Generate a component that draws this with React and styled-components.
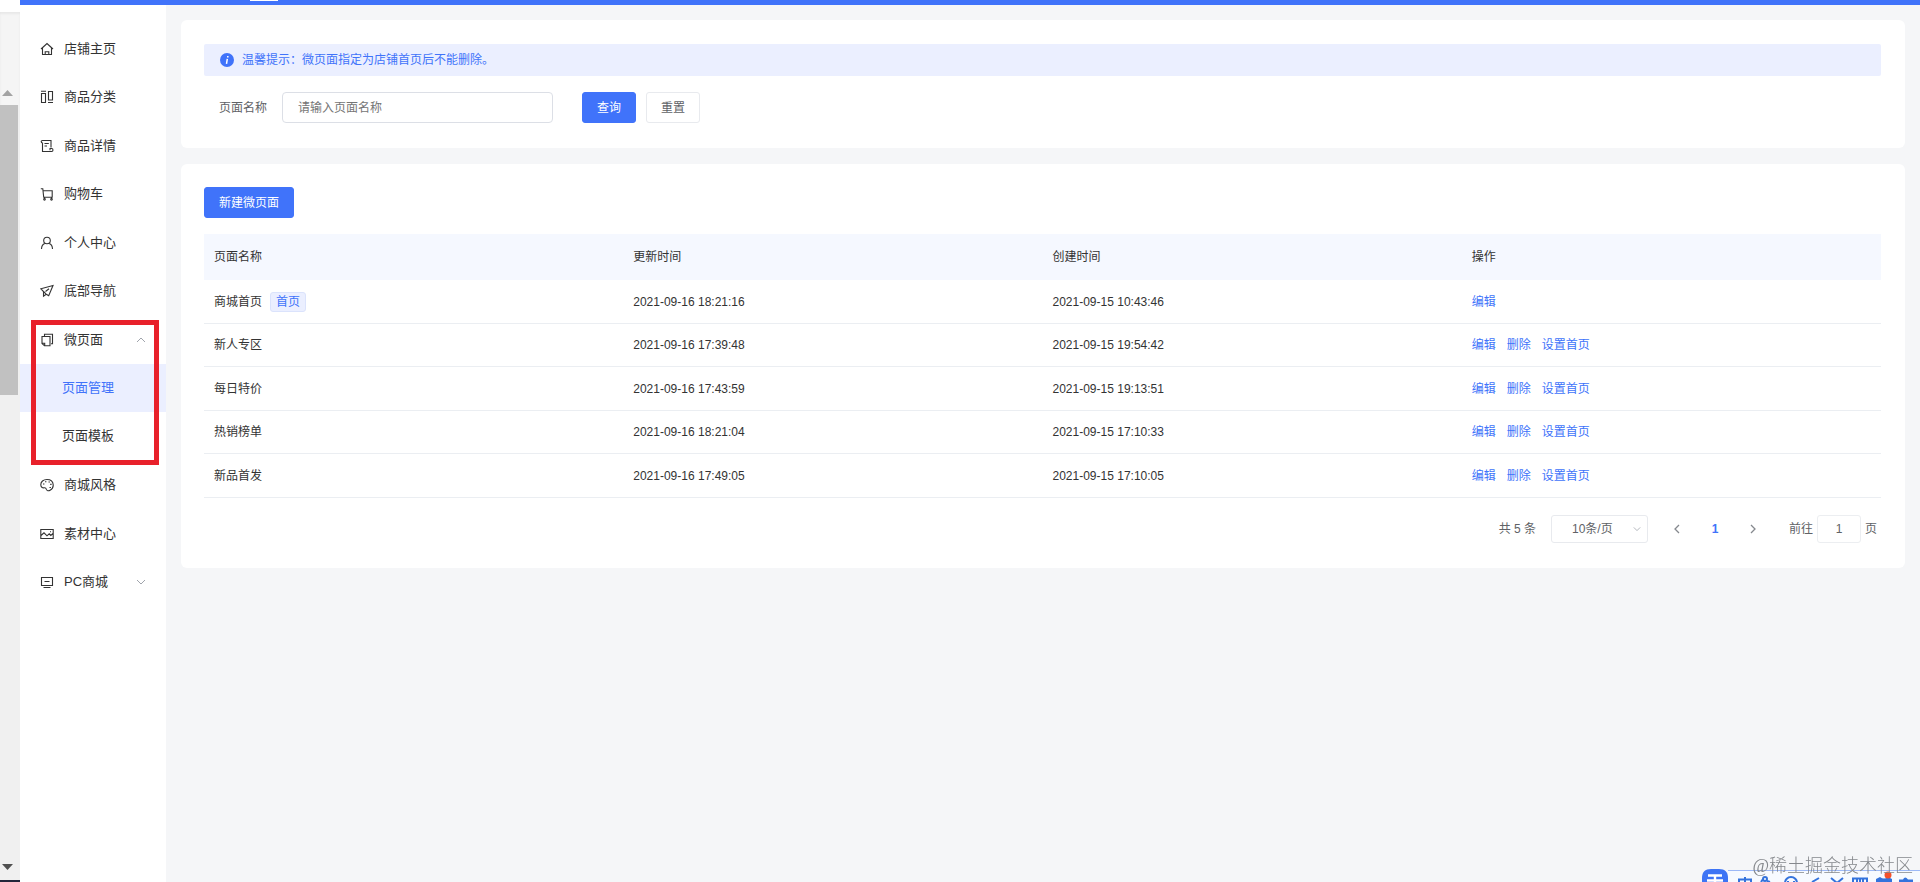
import React, { useState } from 'react';
import styled, { createGlobalStyle, ThemeProvider } from 'styled-components';

const theme = {
  primary: '#4073fa',
  primaryLight: '#ebefff',
  headLight: '#f5f8ff',
  page: '#f5f6f8',
  text: '#333333',
  textSecondary: '#606266',
  border: '#dcdfe6',
  line: '#ebeef2',
  mark: '#e8212b',
};

const GlobalStyle = createGlobalStyle`
  * {
    box-sizing: border-box;
  }

  body {
    margin: 0;
    background: ${props => props.theme.page};
    color: ${props => props.theme.text};
    font-family: 'Liberation Sans', 'Noto Sans CJK SC', sans-serif;
    font-size: 12px;
    line-height: 20px;
  }

  button, input, select {
    font: inherit;
    color: inherit;
  }
`;

const Shell = styled.div`
  display: flex;
  min-height: 100vh;
`;

const Rail = styled.div`
  display: flex;
  flex-direction: column;
  flex: none;
  width: 20px;
  background: #f0f0f0;
  border-bottom: 2px solid #23263a;
`;

const RailTop = styled.div`
  height: 12px;
  background: #ffffff;
`;

const RailHead = styled.div`
  height: 93px;
  padding: 78px 0 0 2px;
  background: #f5f5f5;
  box-shadow: inset 0 2px 2px #e8e8e8;
`;

const RailThumb = styled.div`
  width: 18px;
  height: 290px;
  background: #c1c1c1;
`;

const RailFoot = styled.div`
  margin-top: auto;
  height: 16px;
  padding-left: 2px;
`;

const Arrow = styled.svg`
  display: block;
  width: 11px;
  height: 6px;
  fill: ${props => props.$color};
`;

const Main = styled.div`
  display: flex;
  flex-direction: column;
  flex: 1;
  min-width: 0;
`;

const TopBar = styled.header`
  height: 5px;
  padding-left: 230px;
  background: ${props => props.theme.primary};
`;

const TopMark = styled.div`
  width: 28px;
  height: 1px;
  background: #ffffff;
`;

const Body = styled.div`
  display: flex;
  flex: 1;
`;

const Sidebar = styled.nav`
  flex: none;
  width: 146px;
  padding-top: 20px;
  background: #ffffff;
  font-size: 13px;
`;

const Menu = styled.ul`
  margin: 0;
  padding: 0;
  list-style: none;
`;

const MenuItem = styled.li`
  position: relative;

  &:nth-child(even) {
    margin-bottom: 1px;
  }
`;

const MenuLink = styled.a`
  display: flex;
  align-items: center;
  height: 48px;
  padding: 0 20px;
  color: ${props => props.theme.text};
  text-decoration: none;
`;

const MenuText = styled.span`
  flex: 1;
  margin-left: 10px;
`;

const SubMenu = styled.div`
  padding-bottom: 1px;
`;

const SubLink = styled.a`
  display: flex;
  align-items: center;
  height: 48px;
  padding-left: 42px;
  background: ${props => (props.$active ? props.theme.primaryLight : 'transparent')};
  color: ${props => (props.$active ? props.theme.primary : props.theme.text)};
  text-decoration: none;
`;

const Highlight = styled.div`
  position: absolute;
  top: 4px;
  right: 7px;
  bottom: -4px;
  left: 11px;
  border: 5px solid ${props => props.theme.mark};
  pointer-events: none;
`;

const Icon = styled.svg`
  flex: none;
  width: 14px;
  height: 14px;
  fill: none;
  stroke: currentColor;
  stroke-width: 1.1;
`;

const Chevron = styled.svg`
  flex: none;
  width: ${props => props.$size || 10}px;
  height: ${props => props.$size || 10}px;
  fill: none;
  stroke: ${props => props.$color || '#a0a4ac'};
  stroke-width: ${props => props.$weight || 1};
`;

const Content = styled.main`
  display: flex;
  flex: 1;
  flex-direction: column;
  gap: 16px;
  min-width: 0;
  padding: 15px;
`;

const Card = styled.section`
  padding: ${props => props.$top}px 24px 25px 23px;
  border-radius: 6px;
  background: #ffffff;
`;

const Notice = styled.p`
  display: flex;
  align-items: center;
  gap: 8px;
  height: 32px;
  margin: 0 0 16px;
  padding-left: 16px;
  border-radius: 2px;
  background: ${props => props.theme.primaryLight};
  color: ${props => props.theme.primary};
`;

const NoticeIcon = styled.svg`
  width: 14px;
  height: 14px;
`;

const SearchForm = styled.form`
  display: flex;
  align-items: center;
  padding-left: 15px;
`;

const Label = styled.label`
  color: ${props => props.theme.textSecondary};
`;

const SearchInput = styled.input`
  width: 271px;
  height: 31px;
  margin: 0 29px 0 15px;
  padding: 0 15px;
  border: 1px solid ${props => props.theme.border};
  border-radius: 4px;
  outline: none;

  &::placeholder {
    color: #757575;
    opacity: 1;
  }
`;

const Button = styled.button`
  height: 31px;
  padding: 0 14px;
  border: 1px solid ${props => (props.$primary ? props.theme.primary : '#e8eaee')};
  border-radius: 3px;
  background: ${props => (props.$primary ? props.theme.primary : '#ffffff')};
  color: ${props => (props.$primary ? '#ffffff' : props.theme.textSecondary)};
  cursor: pointer;

  & + & {
    margin-left: 10px;
  }
`;

const Table = styled.table`
  width: 100%;
  margin-top: 16px;
  border-collapse: separate;
  border-spacing: 0;
  table-layout: fixed;
`;

const HeadCell = styled.th`
  height: 46px;
  padding: 0 10px;
  background: ${props => props.theme.headLight};
  font-weight: 400;
  text-align: left;
`;

const Row = styled.tr`
  height: 43px;

  &:nth-child(odd) {
    height: 44px;
  }
`;

const Cell = styled.td`
  padding: 0 10px;
  border-bottom: 1px solid ${props => props.theme.line};
`;

const NameLine = styled.div`
  display: flex;
  align-items: center;
  gap: 8px;
`;

const Tag = styled.span`
  padding: 0 5px;
  border: 1px solid #dbe3fc;
  border-radius: 3px;
  background: ${props => props.theme.primaryLight};
  color: ${props => props.theme.primary};
  line-height: 18px;
`;

const Actions = styled.div`
  display: flex;
  gap: 11px;
`;

const Action = styled.a`
  color: ${props => props.theme.primary};
  text-decoration: none;
`;

const Pager = styled.div`
  display: flex;
  align-items: center;
  justify-content: flex-end;
  margin-top: 17px;
  padding-right: 4px;
  color: ${props => props.theme.textSecondary};
`;

const SizeBox = styled.div`
  position: relative;
  margin: 0 10px 0 15px;
`;

const SizeSelect = styled.select`
  display: block;
  width: 97px;
  height: 28px;
  padding: 0 20px;
  border: 1px solid #e8eaee;
  border-radius: 3px;
  background: #ffffff;
  appearance: none;
`;

const SizeArrow = styled.span`
  position: absolute;
  top: 0;
  right: 7px;
  display: flex;
  align-items: center;
  height: 28px;
  pointer-events: none;
`;

const PageButton = styled.button`
  display: flex;
  align-items: center;
  justify-content: center;
  width: 38px;
  height: 28px;
  padding: 0;
  border: 0;
  background: transparent;
  color: ${props => props.theme.primary};
  font-weight: 700;
  cursor: pointer;
`;

const JumpLabel = styled.label`
  display: flex;
  align-items: center;
  gap: 4px;
  margin-left: 17px;
`;

const JumpInput = styled.input`
  width: 44px;
  height: 28px;
  padding: 0;
  border: 1px solid #eceef1;
  border-radius: 3px;
  text-align: center;
`;

const Watermark = styled.div`
  position: fixed;
  right: 7px;
  bottom: 3px;
  z-index: 2;
  color: #85888c;
  font-family: 'Liberation Serif', 'Noto Sans CJK SC', serif;
  font-size: 18px;
  font-weight: 300;
  line-height: 26px;
`;

const InputBar = styled.div`
  position: fixed;
  right: 0;
  bottom: 0;
  display: flex;
  align-items: flex-end;
  height: 13px;
`;

const InputLogo = styled.svg`
  display: block;
  width: 26px;
  height: 13px;
`;

const InputIcons = styled.svg`
  display: block;
  width: 192px;
  height: 12px;
`;

const icons = {
  home: <path d="M1 7 7 1.5 13 7M2.5 6v6.500h9V6M5.2 12.500V9.800h3.600v2.700" />,
  category: <path d="M1.5 3.500h4v9h-4zM8.500 1.500h4v8.500h-4zM1 1.300h5M8 12.500h5" />,
  detail: (
    <path d="M2.500 1.500h8.500v7M2.500 1.500C.8 1.500.8 4 2.500 4v8.500h9.200c1.700 0 1.700-3 0-3H10v1.800M4.500 4.500h4.300M4.500 7H7" />
  ),
  cart: (
    <>
      <path d="M.8 1.800h2l.9 8.500h8.500V3.800H3M4.500 10.300v1.500M11.500 10.300v1.500" />
      <circle cx="4.500" cy="12.300" r=".8" />
      <circle cx="11.500" cy="12.300" r=".8" />
    </>
  ),
  user: (
    <>
      <circle cx="7" cy="4.500" r="3.300" />
      <path d="M1.500 13c.1-3 1.200-4.800 3.300-5.500M12.500 13c-.1-3-1.200-4.800-3.300-5.500" />
    </>
  ),
  send: <path d="M13 1.500.9 4.800l2.600 2.700v4.700l2.700-2 2.500 1.600zM3.500 7.500l2.700 2.700M5.500 7.500l3.500-2.700" />,
  pages: <path d="M4.500 3V1.200h8v9.600H11M2 3.500h8v9.300H4.500L2 10.500zM2.300 10.300h2.400v2.300" />,
  palette: (
    <>
      <path d="M7 1.500C3.200 1.500.8 3.800.8 6.700c0 2.300 1.700 3.400 3.300 3.100 1.500-.3 2 .6 2.300 1.600.5 1.400 2 1.800 3.700.9 2.200-1.200 3.300-3.100 3.100-5.600C13 3.500 10.500 1.500 7 1.500z" />
      <path d="M3 6h1.400M5 3.800h1.400M8.500 4h1.400M10.200 6.400h1.400M9.500 9.500h1.400" />
    </>
  ),
  image: <path d="M.8 2.500h12.400v9H.8zM1 8.500l3-2.700 3 3 2.200-2 1.600 1.700 2.200-2M10 4.800h1" />,
  desktop: <path d="M1.500 2.500h11v8h-11zM4.500 6.500h5M3.500 12.500h7" />,
};

const menu = [
  { label: '店铺主页', icon: 'home' },
  { label: '商品分类', icon: 'category' },
  { label: '商品详情', icon: 'detail' },
  { label: '购物车', icon: 'cart' },
  { label: '个人中心', icon: 'user' },
  { label: '底部导航', icon: 'send' },
  { label: '微页面', icon: 'pages', children: ['页面管理', '页面模板'] },
  { label: '商城风格', icon: 'palette' },
  { label: '素材中心', icon: 'image' },
  { label: 'PC商城', icon: 'desktop', collapsed: true },
];

const rows = [
  { name: '商城首页', updated: '2021-09-16 18:21:16', created: '2021-09-15 10:43:46', home: true },
  { name: '新人专区', updated: '2021-09-16 17:39:48', created: '2021-09-15 19:54:42' },
  { name: '每日特价', updated: '2021-09-16 17:43:59', created: '2021-09-15 19:13:51' },
  { name: '热销榜单', updated: '2021-09-16 18:21:04', created: '2021-09-15 17:10:33' },
  { name: '新品首发', updated: '2021-09-16 17:49:05', created: '2021-09-15 17:10:05' },
];

const SideMenu = () => {
  const [active, setActive] = useState('页面管理');

  return (
    <Sidebar>
      <Menu>
        {menu.map(item => (
          <MenuItem key={item.label}>
            <MenuLink href="#">
              <Icon viewBox="0 0 14 14">{icons[item.icon]}</Icon>
              <MenuText>{item.label}</MenuText>
              {item.children && (
                <Chevron viewBox="0 0 10 10">
                  <path d="M1 7l4-4 4 4" />
                </Chevron>
              )}
              {item.collapsed && (
                <Chevron viewBox="0 0 10 10">
                  <path d="M1 3l4 4 4-4" />
                </Chevron>
              )}
            </MenuLink>
            {item.children && (
              <SubMenu>
                {item.children.map(child => (
                  <SubLink
                    key={child}
                    href="#"
                    $active={active === child}
                    onClick={() => setActive(child)}
                  >
                    {child}
                  </SubLink>
                ))}
              </SubMenu>
            )}
            {item.children && <Highlight />}
          </MenuItem>
        ))}
      </Menu>
    </Sidebar>
  );
};

const SearchCard = () => {
  const [name, setName] = useState('');

  return (
    <Card $top={24}>
      <Notice>
        <NoticeIcon viewBox="0 0 14 14">
          <circle cx="7" cy="7" r="7" fill="#4073fa" />
          <path d="M7.3 5.8 6.5 10.8M7.8 3v1.5" stroke="#ffffff" strokeWidth="1.5" />
        </NoticeIcon>
        温馨提示：微页面指定为店铺首页后不能删除。
      </Notice>
      <SearchForm onSubmit={e => e.preventDefault()}>
        <Label htmlFor="page-name">页面名称</Label>
        <SearchInput
          id="page-name"
          placeholder="请输入页面名称"
          value={name}
          onChange={e => setName(e.target.value)}
        />
        <Button type="submit" $primary>
          查询
        </Button>
        <Button type="button" onClick={() => setName('')}>
          重置
        </Button>
      </SearchForm>
    </Card>
  );
};

const Pagination = () => (
  <Pager>
    <span>共 5 条</span>
    <SizeBox>
      <SizeSelect aria-label="每页条数" defaultValue="10">
        <option value="10">10条/页</option>
      </SizeSelect>
      <SizeArrow>
        <Chevron viewBox="0 0 10 10" $size={8} $color="#a0a4ac">
          <path d="M1 3l4 4 4-4" />
        </Chevron>
      </SizeArrow>
    </SizeBox>
    <PageButton type="button" aria-label="上一页">
      <Chevron viewBox="0 0 10 10" $color="#85888e" $weight={1.3}>
        <path d="M7 1 3 5l4 4" />
      </Chevron>
    </PageButton>
    <PageButton type="button">1</PageButton>
    <PageButton type="button" aria-label="下一页">
      <Chevron viewBox="0 0 10 10" $color="#85888e" $weight={1.3}>
        <path d="M3 1l4 4-4 4" />
      </Chevron>
    </PageButton>
    <JumpLabel>
      前往
      <JumpInput defaultValue="1" />页
    </JumpLabel>
  </Pager>
);

const PageTable = () => (
  <Card $top={23}>
    <Button type="button" $primary>
      新建微页面
    </Button>
    <Table>
      <thead>
        <tr>
          <HeadCell>页面名称</HeadCell>
          <HeadCell>更新时间</HeadCell>
          <HeadCell>创建时间</HeadCell>
          <HeadCell>操作</HeadCell>
        </tr>
      </thead>
      <tbody>
        {rows.map(row => (
          <Row key={row.name}>
            <Cell>
              <NameLine>
                {row.name}
                {row.home && <Tag>首页</Tag>}
              </NameLine>
            </Cell>
            <Cell>{row.updated}</Cell>
            <Cell>{row.created}</Cell>
            <Cell>
              <Actions>
                <Action href="#">编辑</Action>
                {!row.home && <Action href="#">删除</Action>}
                {!row.home && <Action href="#">设置首页</Action>}
              </Actions>
            </Cell>
          </Row>
        ))}
      </tbody>
    </Table>
    <Pagination />
  </Card>
);

// Input method toolbar docked at the bottom edge, only its top shows
const InputToolbar = () => (
  <InputBar>
    <InputLogo viewBox="0 0 26 13">
      <path d="M0 13V9C0 3 3 0 9 0h8c6 0 9 3 9 9v4z" fill="#3d74f5" />
      <path d="M6 6.500h14M5 11.500h16M13 6.500V13" stroke="#ffffff" strokeWidth="2.400" />
    </InputLogo>
    <InputIcons viewBox="0 0 192 12">
      <rect width="192" height="12" fill="#f7faff" />
      <path d="M0 .5h192" stroke="#9db9f7" />
      <g fill="none" stroke="#3473dd" strokeWidth="2">
        <path d="M11 12V9.500h12V12M17 7v5M33 12l2-3M42 12l-3-1" />
        <circle cx="37" cy="9" r="2" />
        <circle cx="63" cy="13" r="6" />
        <path d="M60 12v-1M66 12v-1M84 12l7-4M103 8l6 5M115 8l-6 5M125 12V8.500h14V12M129 9v3M132 9v3M135 9v3" />
      </g>
      <path d="M148 12V9l4-2q4 3 8 0l4 2v3zM171 12V9.500h4q2-4 5 0h5V12z" fill="#3473dd" />
      <circle cx="160" cy="5" r="3.500" fill="#f4512c" />
    </InputIcons>
  </InputBar>
);

const App = () => (
  <ThemeProvider theme={theme}>
    <GlobalStyle />
    <Shell>
      <Rail>
        <RailTop />
        <RailHead>
          <Arrow viewBox="0 0 11 6" $color="#a3a3a3">
            <path d="M0 6 5.500 0 11 6z" />
          </Arrow>
        </RailHead>
        <RailThumb />
        <RailFoot>
          <Arrow viewBox="0 0 11 6" $color="#505050">
            <path d="M0 0h11L5.500 6z" />
          </Arrow>
        </RailFoot>
      </Rail>
      <Main>
        <TopBar>
          <TopMark />
        </TopBar>
        <Body>
          <SideMenu />
          <Content>
            <SearchCard />
            <PageTable />
          </Content>
        </Body>
      </Main>
    </Shell>
    <Watermark>@稀土掘金技术社区</Watermark>
    <InputToolbar />
  </ThemeProvider>
);

export default App;
